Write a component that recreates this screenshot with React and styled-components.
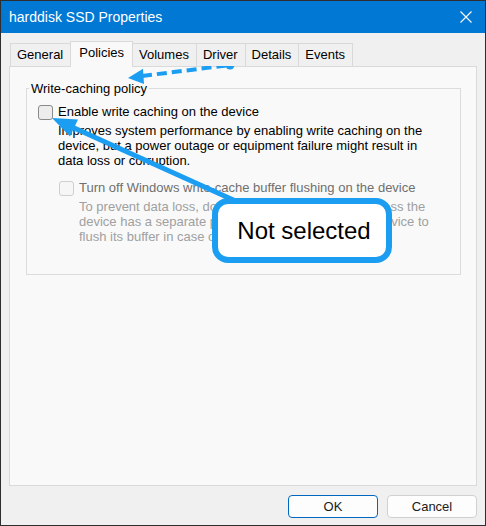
import React from "react";
import styled, { createGlobalStyle } from "styled-components";

const GlobalStyle = createGlobalStyle`
  body {
    margin: 0;
    background: #fff;
    font-family: "Liberation Sans", Arial, sans-serif;
  }
`;

const TABS = ["General", "Policies", "Volumes", "Driver", "Details", "Events"];
const BLUE = "#1b9ef2";

// Annotation layer: arrows drawn over the dialog
const Arrows = () => (
  <ArrowLayer width="486" height="526" viewBox="0 0 486 526">
    {/* dashed arrow pointing at the Policies tab */}
    <line x1="142" y1="76" x2="230" y2="65" stroke={BLUE} strokeWidth="4" strokeDasharray="10 5" />
    <circle cx="230" cy="65" r="4.5" fill={BLUE} />
    <polygon points="128,78 143,68.8 144,84" fill={BLUE} />
    {/* solid arrow from the callout to the checkbox */}
    <line x1="72" y1="127" x2="240" y2="203" stroke={BLUE} strokeWidth="5" />
    <polygon points="52,118 78,119.5 70,136.5" fill={BLUE} />
  </ArrowLayer>
);

const App = () => {
  return (
    <>
      <GlobalStyle />
      <Stage>
        <Window>
          <TitleBar>
            <Title>harddisk SSD Properties</Title>
            <CloseButton aria-label="Close">
              <svg width="12" height="12" viewBox="0 0 12 12">
                <path d="M0.5 0.5 L11.5 11.5 M11.5 0.5 L0.5 11.5" stroke="#fff" strokeWidth="1.1" />
              </svg>
            </CloseButton>
          </TitleBar>
          <Body>
            <TabStrip>
              {TABS.map((t) => (
                <Tab key={t} $active={t === "Policies"}>
                  {t}
                </Tab>
              ))}
            </TabStrip>
            <TabPage>
              <GroupBox>
                <Legend>Write-caching policy</Legend>
                <GroupContent>
                  <Option>
                    <CheckRow>
                      <Checkbox />
                      <Label>Enable write caching on the device</Label>
                    </CheckRow>
                    <Description>
                      Improves system performance by enabling write caching on the
                      <br />
                      device, but a power outage or equipment failure might result in
                      <br />
                      data loss or corruption.
                    </Description>
                  </Option>
                  <Option $nested>
                    <CheckRow>
                      <Checkbox $disabled />
                      <Label $disabled>Turn off Windows write-cache buffer flushing on the device</Label>
                    </CheckRow>
                    <Description $disabled>
                      To prevent data loss, do not select this check box unless the
                      <br />
                      device has a separate power supply that allows the device to
                      <br />
                      flush its buffer in case of power failure.
                    </Description>
                  </Option>
                </GroupContent>
              </GroupBox>
            </TabPage>
            <ButtonRow>
              <Button $primary>OK</Button>
              <Button>Cancel</Button>
            </ButtonRow>
          </Body>
        </Window>
        <Arrows />
        <Callout>Not selected</Callout>
      </Stage>
    </>
  );
};

export default App;

const Stage = styled.div`
  position: relative;
  width: 486px;
  height: 526px;
`;

const Window = styled.div`
  width: 486px;
  height: 526px;
  box-sizing: border-box;
  border: 1px solid #2e2e2e;
  background: #f0f0f0;
  display: flex;
  flex-direction: column;
  overflow: hidden;
`;

const TitleBar = styled.div`
  height: 32px;
  flex: none;
  background: #0078d4;
  display: flex;
  align-items: center;
  justify-content: space-between;
  padding-left: 8px;
  color: #fff;
`;

const Title = styled.span`
  font-size: 14px;
`;

const CloseButton = styled.div`
  width: 12px;
  height: 12px;
  margin-right: 13px;
  display: flex;
`;

const Body = styled.div`
  flex: 1;
  display: flex;
  flex-direction: column;
  padding: 8px 8px 7px 8px;
`;

const TabStrip = styled.div`
  display: flex;
  align-items: flex-end;
  height: 26px;
  padding-left: 2px;
  margin-bottom: -1px;
  position: relative;
  z-index: 1;
`;

const Tab = styled.div`
  box-sizing: border-box;
  height: ${({ $active }) => ($active ? "26px" : "23px")};
  margin-bottom: ${({ $active }) => ($active ? "0" : "1px")};
  margin-left: -1px;
  padding: ${({ $active }) => ($active ? "3px 8px 0" : "3px 7px 0 6px")};
  border: 1px solid #d9d9d9;
  border-bottom: none;
  background: ${({ $active }) => ($active ? "#f9f9f9" : "#f0f0f0")};
  font-size: 13px;
  line-height: 15px;
  color: #000;
  position: relative;
  z-index: ${({ $active }) => ($active ? 1 : 0)};
`;

const TabPage = styled.div`
  flex: 1;
  background: #f9f9f9;
  border: 1px solid #dadada;
  padding: 14px 15px 0 16px;
`;

const GroupBox = styled.fieldset`
  margin: 0;
  padding: 0;
  box-sizing: border-box;
  height: 194px;
  border: 1px solid #dcdcdc;
`;

const Legend = styled.legend`
  margin-left: 2px;
  padding: 0 2px;
  font-size: 13px;
  line-height: 15px;
  color: #000;
`;

const GroupContent = styled.div`
  padding: 8px 0 0 11px;
`;

const Option = styled.div`
  margin-left: ${({ $nested }) => ($nested ? "21px" : "0")};
  margin-top: ${({ $nested }) => ($nested ? "12px" : "0")};
`;

const CheckRow = styled.div`
  display: flex;
  align-items: center;
  gap: 5px;
  height: 16px;
`;

const Checkbox = styled.span`
  box-sizing: border-box;
  width: 15px;
  height: 15px;
  border-radius: 3px;
  border: 1px solid ${({ $disabled }) => ($disabled ? "#cfcfcf" : "#8a8a8a")};
  background: ${({ $disabled }) => ($disabled ? "#f6f6f6" : "#ededed")};
`;

const Label = styled.span`
  font-size: 13px;
  line-height: 16px;
  color: ${({ $disabled }) => ($disabled ? "#6f6f6f" : "#000")};
`;

const Description = styled.div`
  margin: 3px 0 0 20px;
  font-size: 13px;
  line-height: 15px;
  color: ${({ $disabled }) => ($disabled ? "#a0a0a0" : "#000")};
`;

const ButtonRow = styled.div`
  display: flex;
  justify-content: flex-end;
  gap: 9px;
  margin-top: 9px;
`;

const Button = styled.div`
  box-sizing: border-box;
  width: 90px;
  height: 23px;
  display: flex;
  align-items: center;
  justify-content: center;
  border-radius: 4px;
  background: #fdfdfd;
  border: 1px solid ${({ $primary }) => ($primary ? "#0067c0" : "#d0d0d0")};
  font-size: 13px;
  color: #1b1b1b;
`;

const ArrowLayer = styled.svg`
  position: absolute;
  left: 0;
  top: 0;
  pointer-events: none;
`;

const Callout = styled.div`
  position: absolute;
  left: 212px;
  top: 198px;
  width: 180px;
  height: 65px;
  box-sizing: border-box;
  border: 6px solid ${BLUE};
  border-radius: 16px;
  background: #fff;
  display: flex;
  align-items: center;
  justify-content: center;
  padding-left: 4px;
  font-size: 24px;
  color: #000;
`;
